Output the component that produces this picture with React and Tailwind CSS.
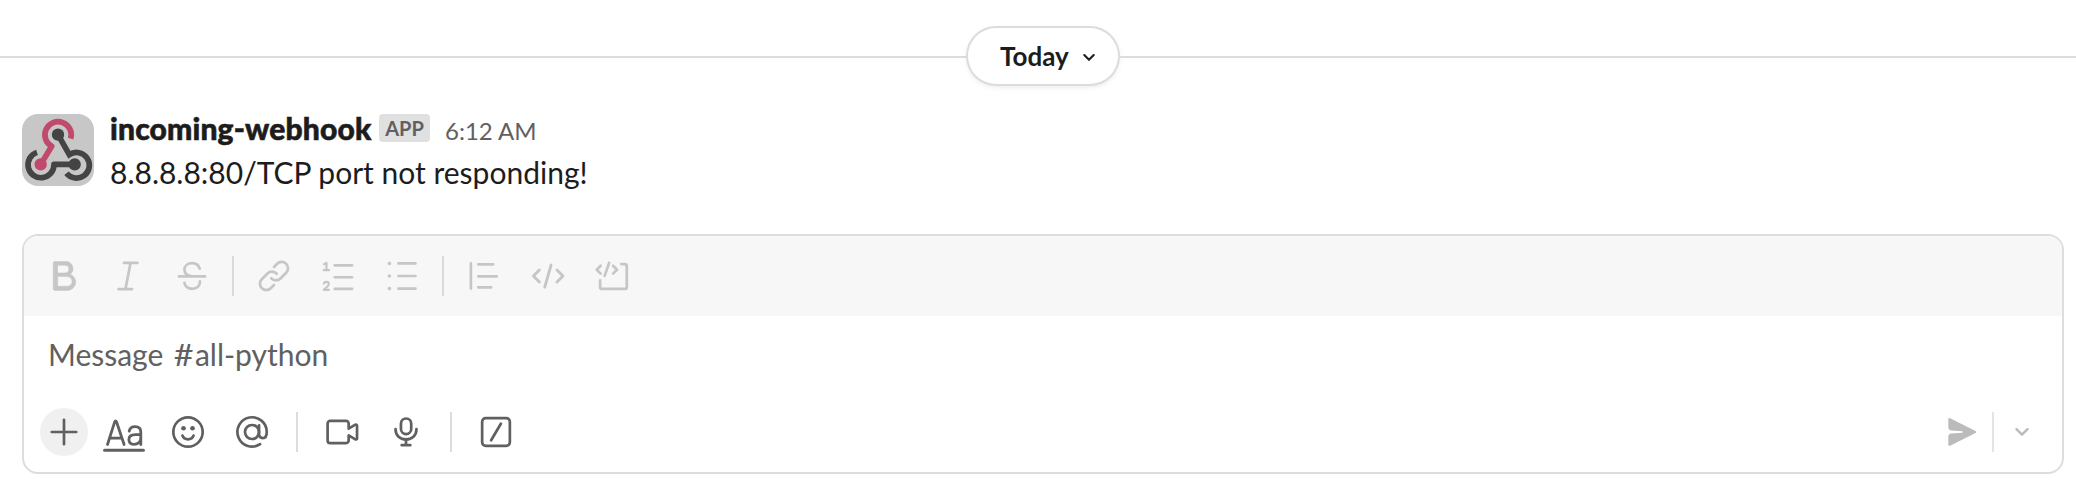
import React from "react";

function Icon({ children, width = 1.5 }) {
  return (
    <svg
      viewBox="0 0 20 20"
      className="size-9 shrink-0 overflow-visible"
      fill="none"
      stroke="currentColor"
      strokeWidth={width}
      strokeLinecap="round"
      strokeLinejoin="round"
      aria-hidden="true"
    >
      {children}
    </svg>
  );
}

function IconButton({ label, children }) {
  return (
    <button type="button" aria-label={label} className="flex size-14 shrink-0 items-center justify-center">
      {children}
    </button>
  );
}

const BoldIcon = () => (
  <Icon>
    <path
      fill="currentColor"
      stroke="currentColor"
      strokeWidth="0.3"
      fillRule="evenodd"
      d="M4 2.75A.75.75 0 0 1 4.75 2h6.343a3.907 3.907 0 0 1 2.357 7.025A4.627 4.627 0 0 1 11.875 18H4.75a.75.75 0 0 1-.75-.75zm2.5 5.565h4.093a2.157 2.157 0 1 0 0-4.315H6.5zm0 1.935v5.5h5.25a2.75 2.75 0 1 0 0-5.5z"
    />
  </Icon>
);

const ItalicIcon = () => (
  <Icon>
    <path d="M7.75 2.75h7.5M4.75 17.25h7.5M11.4 2.75l-2.8 14.5" />
  </Icon>
);

const StrikeIcon = () => (
  <Icon>
    <path d="M2.75 10.25h14.5M14.3 5.9C13.6 3.9 12 2.9 10 2.9c-2.4 0-4.2 1.4-4.2 3.6 0 2.1 1.7 3.4 4.6 3.7M5.8 13.8c.5 2.1 2.2 3.3 4.3 3.3 2.5 0 4.3-1.4 4.3-3.6V13" />
  </Icon>
);

const LinkIcon = () => (
  <Icon>
    <path
      fill="currentColor"
      stroke="none"
      d="M12.306 3.756a2.75 2.75 0 0 1 3.889 0l.05.05a2.75 2.75 0 0 1 0 3.889l-3.18 3.18a2.75 2.75 0 0 1-3.98-.095l-.03-.034a.75.75 0 0 0-1.11 1.009l.03.034a4.25 4.25 0 0 0 6.15.146l3.18-3.18a4.25 4.25 0 0 0 0-6.01l-.05-.05a4.25 4.25 0 0 0-6.01 0L9.47 4.47a.75.75 0 1 0 1.06 1.06zm-4.611 12.49a2.75 2.75 0 0 1-3.89 0l-.05-.051a2.75 2.75 0 0 1 0-3.89l3.18-3.179a2.75 2.75 0 0 1 3.98.095l.03.034a.75.75 0 1 0 1.11-1.01l-.03-.033a4.25 4.25 0 0 0-6.15-.146l-3.18 3.18a4.25 4.25 0 0 0 0 6.01l.05.05a4.25 4.25 0 0 0 6.01 0l1.775-1.775a.75.75 0 0 0-1.06-1.06z"
    />
  </Icon>
);

const OrderedListIcon = () => (
  <Icon>
    <path d="M8.2 4.1h9.6M8.2 10.7h9.6M8.2 17.2h9.6" />
    <path strokeWidth="1.2" d="M2.2 3.4l1.4-.7v4M2 6.7h3.1M2.1 14.2c.2-.6.8-.9 1.4-.9.8 0 1.4.5 1.4 1.2 0 1.1-1.4 1.8-2.8 3.2H5" />
  </Icon>
);

const BulletListIcon = () => (
  <Icon>
    <path d="M8 3h9.5M8 10h9.5M8 17h9.5" />
    <g fill="currentColor" stroke="none">
      <circle cx="3" cy="3" r="1" />
      <circle cx="3" cy="10" r="1" />
      <circle cx="3" cy="17" r="1" />
    </g>
  </Icon>
);

const QuoteIcon = () => (
  <Icon>
    <path d="M2.7 3v14M6.8 3.5h8.3M6.8 10.2h10.3M6.8 16.3H14" />
  </Icon>
);

const CodeIcon = () => (
  <Icon width={1.6}>
    <path d="M5.2 6.7 1.9 10l3.3 3.3M15 6.7l3.3 3.3-3.3 3.3M11.7 3.9 8.2 16.2" />
  </Icon>
);

const CodeBlockIcon = () => (
  <Icon>
    <path d="M3.7 4.3 1.5 6.5l2.2 2.2M10.6 4.3l2.2 2.2-2.2 2.2M8.4 2.7 5.9 9.9M15.1 3.4h2.1a1 1 0 0 1 1 1v11.8a1 1 0 0 1-1 1H4.4a1 1 0 0 1-1-1v-3.8" />
  </Icon>
);

const PlusIcon = () => (
  <Icon>
    <path d="M10 3.2v13.6M3.2 10h13.6" />
  </Icon>
);

const FormattingIcon = () => (
  <svg
    viewBox="0 0 42 36"
    className="h-9 w-[42px] shrink-0 overflow-visible"
    fill="none"
    stroke="currentColor"
    strokeWidth="2.8"
    strokeLinecap="round"
    strokeLinejoin="round"
    aria-hidden="true"
  >
    <path d="M4.500 30.500 11.700 7.800q.9-2 1.800 0l7.600 22.700M6.700 24.200h12.200" />
    <path d="M26.200 17.200c.5-2.900 2.700-4.500 5.900-4.500 3.600 0 5.700 2 5.700 5.400v12.400M37.800 20.600h-5.600c-3.900 0-6.300 1.600-6.300 4.900 0 3 2 4.800 5 4.800 4 0 6.900-2.400 6.900-6.200" />
    <path strokeWidth="3" d="M1.600 36.300h38.800" />
  </svg>
);

const EmojiIcon = () => (
  <Icon>
    <circle cx="10" cy="10" r="8.15" />
    <path d="M6.9 12c.5 1.3 1.7 2.1 3.1 2.1s2.6-.8 3.1-2.1" />
    <g fill="currentColor" stroke="none">
      <circle cx="7.5" cy="7.9" r="1.3" />
      <circle cx="12.5" cy="7.9" r="1.3" />
    </g>
  </Icon>
);

const MentionIcon = () => (
  <Icon>
    <circle cx="10" cy="10" r="3.9" />
    <path d="M13.9 6.300v5c0 1.300.9 2.100 2.100 2.100 1.400 0 2.200-1.300 2.200-3.400a8.150 8.150 0 1 0-3.700 6.800" />
  </Icon>
);

const VideoIcon = () => (
  <Icon>
    <path d="M3.4 3.85h8.900a1.400 1.400 0 0 1 1.400 1.400v2.900l3.700-2.200a.6.6 0 0 1 .95.5v7.100a.6.6 0 0 1-.95.5l-3.700-2.200v2.900a1.400 1.400 0 0 1-1.400 1.400H3.400A1.400 1.400 0 0 1 2 14.750v-9.500a1.400 1.400 0 0 1 1.400-1.400z" />
  </Icon>
);

const MicIcon = () => (
  <Icon>
    <rect x="7.2" y="2.5" width="5.7" height="8.7" rx="2.85" />
    <path d="M4.2 8.4v.2c0 3.3 2.5 5.5 5.8 5.5s5.8-2.2 5.8-5.5v-.2M10 14.2v2.9M7.6 17.3h4.8" />
  </Icon>
);

const SlashIcon = () => (
  <Icon>
    <rect x="2.3" y="2.3" width="15.4" height="15.4" rx="2" />
    <path d="M12.7 5.4 7.3 14.6" />
  </Icon>
);

const SendIcon = () => (
  <Icon>
    <path
      fill="currentColor"
      stroke="none"
      d="M2.4 2.9c0-.5.5-.8 1-.6l14.1 7.1c.5.3.5.9 0 1.2L3.4 17.7c-.5.2-1-.1-1-.6v-4.600c0-.9.6-1.500 1.500-1.600l6.200-.5c.5 0 .5-.8 0-.8l-6.200-.5c-.9-.1-1.500-.7-1.500-1.600z"
    />
  </Icon>
);

function Chevron({ className }) {
  return (
    <svg
      viewBox="0 0 14 8"
      className={className}
      fill="none"
      stroke="currentColor"
      strokeWidth="2.4"
      strokeLinecap="round"
      strokeLinejoin="round"
      aria-hidden="true"
    >
      <path d="M1.5 1.2 7 6.7l5.5-5.5" />
    </svg>
  );
}

function WebhookAvatar() {
  return (
    <div className="mt-2 size-[72px] shrink-0 overflow-hidden rounded-2xl bg-[#c7c7c7]">
      <svg viewBox="0 0 216 216" className="size-full" fill="none" strokeWidth="17" aria-hidden="true">
        <g stroke="#444444">
          <path d="M108 62 142 122A38.500 38.500 0 1 1 133.500 178" />
          <path d="M45 115A39 39 0 1 0 96 151H158" strokeLinejoin="round" />
        </g>
        <path stroke="#bf4a6b" d="M146 74A39.500 39.500 0 1 0 89 97L57 150" strokeLinejoin="round" />
        <circle cx="108" cy="62" r="18.500" fill="#444444" />
        <circle cx="158" cy="151" r="18.500" fill="#444444" />
        <circle cx="56" cy="151" r="18.500" fill="#bf4a6b" />
      </svg>
    </div>
  );
}

function DateDivider() {
  return (
    <div className="flex h-28 items-center">
      <div className="mt-0.5 h-0.5 flex-1 bg-[#dddddd]" />
      <button
        type="button"
        className="flex h-14 w-[150px] items-center rounded-full bg-white pl-8 text-[26px] leading-none font-bold text-[#1d1c1d] shadow-[0_0_0_2px_#dcdcdc,0_2px_6px_rgba(0,0,0,0.12)]"
      >
        Today
        <Chevron className="mt-0.5 ml-3.5 h-[7px] w-3" />
      </button>
      <div className="mt-0.5 h-0.5 w-[958px] bg-[#dddddd]" />
    </div>
  );
}

function Message() {
  return (
    <article className="-mt-1.5 flex gap-4 pl-[22px]">
      <WebhookAvatar />
      <div className="text-[30px] leading-[44px] text-[#1d1c1d]">
        <div className="flex h-11">
          <span className="w-[261px] font-black tracking-[0.16px] whitespace-nowrap [-webkit-text-stroke:0.6px_#1d1c1d]">
            incoming-webhook
          </span>
          <span className="mt-2 ml-2 flex h-7 w-[51px] items-center justify-center rounded bg-[#e0e0e0] text-[20px] leading-none font-bold text-[#616061]">
            APP
          </span>
          <time className="ml-[15px] pt-[3px] text-2xl leading-[44px] text-[#616061]">6:12 AM</time>
        </div>
        <p className="h-11">8.8.8.8:80/TCP port not responding!</p>
      </div>
    </article>
  );
}

function Composer() {
  return (
    <section className="mt-10 mr-3 ml-[22px] h-60 overflow-hidden rounded-2xl border-2 border-[#dddddd] bg-white">
      <div className="flex h-20 items-center gap-2 bg-[#f7f7f7] pl-3 text-[#c6c6c6]">
        <IconButton label="Bold"><BoldIcon /></IconButton>
        <IconButton label="Italic"><ItalicIcon /></IconButton>
        <IconButton label="Strikethrough"><StrikeIcon /></IconButton>
        <span className="mx-1 h-10 w-0.5 bg-[#dadada]" />
        <IconButton label="Link"><LinkIcon /></IconButton>
        <IconButton label="Ordered list"><OrderedListIcon /></IconButton>
        <IconButton label="Bulleted list"><BulletListIcon /></IconButton>
        <span className="mx-1 h-10 w-0.5 bg-[#dadada]" />
        <IconButton label="Blockquote"><QuoteIcon /></IconButton>
        <IconButton label="Code"><CodeIcon /></IconButton>
        <IconButton label="Code block"><CodeBlockIcon /></IconButton>
      </div>
      <div className="h-[76px] pt-4 pl-6 text-[30px] leading-[44px] text-[#616061]">
        Message <span className="mr-[2.9px] ml-[3.6px] inline-block scale-x-[1.14]">#</span>all-python
      </div>
      <div className="flex h-20 items-center gap-2 pl-4 text-[#616061]">
        <button type="button" aria-label="Attach" className="flex size-12 items-center justify-center rounded-full bg-[#f0f0f0]">
          <PlusIcon />
        </button>
        <IconButton label="Formatting"><FormattingIcon /></IconButton>
        <IconButton label="Emoji"><EmojiIcon /></IconButton>
        <IconButton label="Mention"><MentionIcon /></IconButton>
        <span className="mx-2 h-10 w-0.5 bg-[#dddddd]" />
        <IconButton label="Video"><VideoIcon /></IconButton>
        <IconButton label="Audio"><MicIcon /></IconButton>
        <span className="mx-2 h-10 w-0.5 bg-[#dddddd]" />
        <IconButton label="Shortcuts"><SlashIcon /></IconButton>
        <div className="mr-[33px] ml-auto flex items-center text-[#bbbbbb]">
          <IconButton label="Send"><SendIcon /></IconButton>
          <span className="ml-0.5 h-10 w-0.5 bg-[#e3e3e3]" />
          <Chevron className="ml-[21px] h-2 w-3.5" />
        </div>
      </div>
    </section>
  );
}

export default function App() {
  return (
    <main className="h-[482px] w-[2076px] overflow-hidden bg-white font-['Lato',sans-serif]">
      <DateDivider />
      <Message />
      <Composer />
    </main>
  );
}
